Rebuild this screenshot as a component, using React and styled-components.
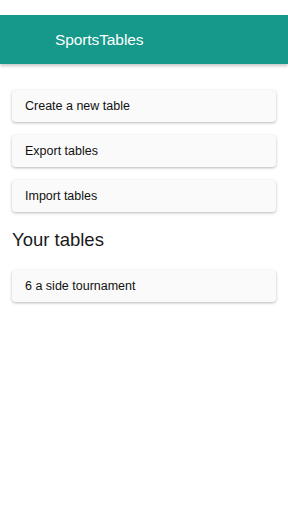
import React from "react";
import styled, { createGlobalStyle } from "styled-components";

const GlobalStyle = createGlobalStyle`
  html, body {
    margin: 0;
    padding: 0;
    background: #ffffff;
    font-family: "Liberation Sans", Arial, sans-serif;
  }
`;

const actions = ["Create a new table", "Export tables", "Import tables"];
const tables = ["6 a side tournament"];

export default function App() {
  return (
    <>
      <GlobalStyle />
      <Page>
        <StatusSpace />
        <Header>
          <Title>SportsTables</Title>
        </Header>
        <Content>
          {actions.map((label) => (
            <Card key={label}>{label}</Card>
          ))}
          <SectionTitle>Your tables</SectionTitle>
          {tables.map((label) => (
            <Card key={label}>{label}</Card>
          ))}
        </Content>
      </Page>
    </>
  );
}

const Page = styled.div`
  width: 288px;
  min-height: 512px;
  display: flex;
  flex-direction: column;
  background: #ffffff;
`;

const StatusSpace = styled.div`
  height: 15px;
  background: #ffffff;
`;

const Header = styled.header`
  height: 49px;
  display: flex;
  align-items: center;
  padding-left: 55px;
  background-color: #16988a;
  box-shadow: 0 2px 3px rgba(0, 0, 0, 0.22);
  position: relative;
  z-index: 1;
`;

const Title = styled.h1`
  margin: 0;
  font-size: 15.5px;
  font-weight: 400;
  color: #ffffff;
  letter-spacing: -0.1px;
`;

const Content = styled.main`
  display: flex;
  flex-direction: column;
  gap: 13px;
  padding: 26px 12px 0;
`;

const Card = styled.div`
  height: 32px;
  display: flex;
  align-items: center;
  padding: 0 13px;
  border-radius: 4px;
  background: #fafafa;
  box-shadow: 0 1px 3px rgba(0, 0, 0, 0.28);
  font-size: 12.5px;
  color: #111111;
`;

const SectionTitle = styled.h2`
  margin: 0 0 2px;
  font-size: 18.5px;
  font-weight: 400;
  color: #1a1a1a;
  line-height: 30px;
`;
